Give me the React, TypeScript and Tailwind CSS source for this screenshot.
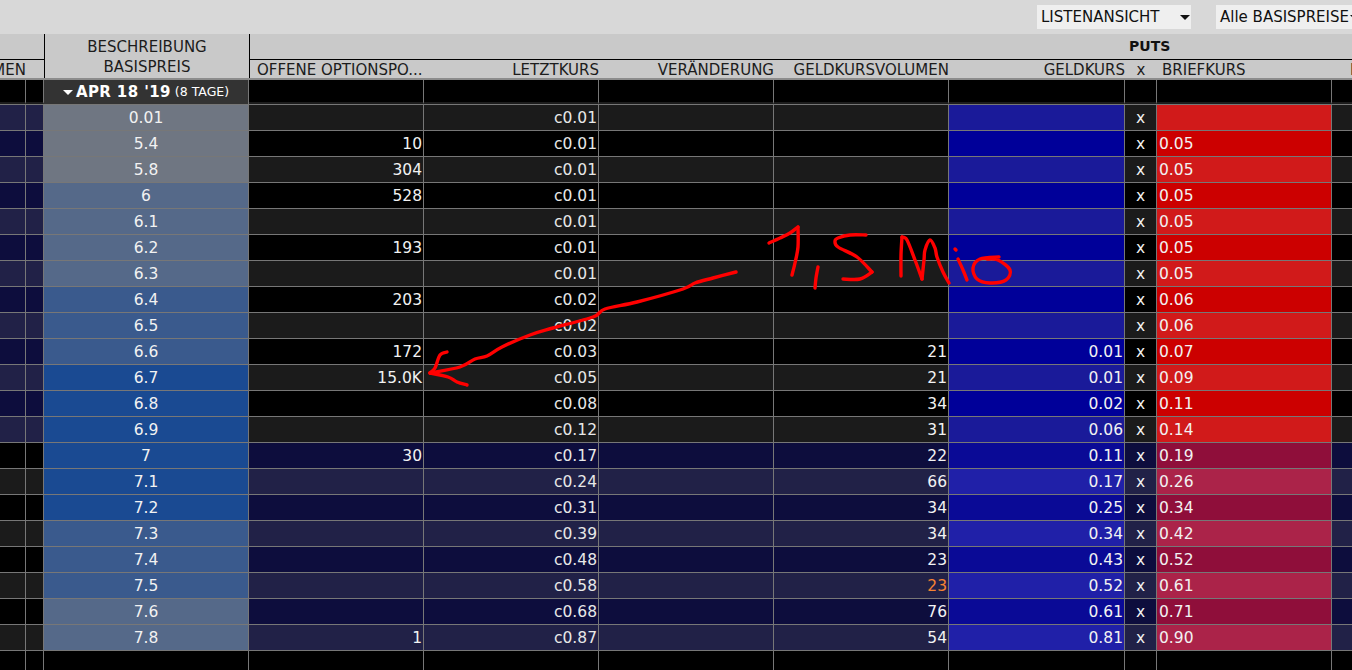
// App.tsx
const font = "[font-family:'DejaVu_Sans',sans-serif]";

type Row = {
  strike: string;
  oi?: string;
  last: string;
  bidSize?: string;
  bid?: string;
  ask?: string;
  orange?: boolean;
  tone: string;
};

const GREY = 'bg-[#6f7682]';
const SLATE = 'bg-[#556989]';
const STEEL = 'bg-[#3a5a8d]';
const BLUE = 'bg-[#1a4a92]';

const rows: Row[] = [
  { strike: '0.01', last: 'c0.01', tone: GREY },
  { strike: '5.4', oi: '10', last: 'c0.01', ask: '0.05', tone: GREY },
  { strike: '5.8', oi: '304', last: 'c0.01', ask: '0.05', tone: GREY },
  { strike: '6', oi: '528', last: 'c0.01', ask: '0.05', tone: SLATE },
  { strike: '6.1', last: 'c0.01', ask: '0.05', tone: SLATE },
  { strike: '6.2', oi: '193', last: 'c0.01', ask: '0.05', tone: SLATE },
  { strike: '6.3', last: 'c0.01', ask: '0.05', tone: SLATE },
  { strike: '6.4', oi: '203', last: 'c0.02', ask: '0.06', tone: STEEL },
  { strike: '6.5', last: 'c0.02', ask: '0.06', tone: STEEL },
  { strike: '6.6', oi: '172', last: 'c0.03', bidSize: '21', bid: '0.01', ask: '0.07', tone: STEEL },
  { strike: '6.7', oi: '15.0K', last: 'c0.05', bidSize: '21', bid: '0.01', ask: '0.09', tone: BLUE },
  { strike: '6.8', last: 'c0.08', bidSize: '34', bid: '0.02', ask: '0.11', tone: BLUE },
  { strike: '6.9', last: 'c0.12', bidSize: '31', bid: '0.06', ask: '0.14', tone: BLUE },
  { strike: '7', oi: '30', last: 'c0.17', bidSize: '22', bid: '0.11', ask: '0.19', tone: BLUE },
  { strike: '7.1', last: 'c0.24', bidSize: '66', bid: '0.17', ask: '0.26', tone: BLUE },
  { strike: '7.2', last: 'c0.31', bidSize: '34', bid: '0.25', ask: '0.34', tone: BLUE },
  { strike: '7.3', last: 'c0.39', bidSize: '34', bid: '0.34', ask: '0.42', tone: STEEL },
  { strike: '7.4', last: 'c0.48', bidSize: '23', bid: '0.43', ask: '0.52', tone: STEEL },
  { strike: '7.5', last: 'c0.58', bidSize: '23', bid: '0.52', ask: '0.61', orange: true, tone: STEEL },
  { strike: '7.6', last: 'c0.68', bidSize: '76', bid: '0.61', ask: '0.71', tone: SLATE },
  { strike: '7.8', oi: '1', last: 'c0.87', bidSize: '54', bid: '0.81', ask: '0.90', tone: SLATE },
];

const grid = 'grid grid-cols-[26px_18px_205px_175px_175px_175px_175px_176px_32px_175px_21px]';
const cell = 'h-[26px] border-r border-b border-[#777] overflow-hidden whitespace-nowrap leading-[27px]';
const groupCell = 'border-r border-b-2 border-[#777] bg-black border-b-[#1c1c1c]';

function DataRow({ row, index }: { row: Row; index: number }) {
  const light = index % 2 === 0;
  const itm = index >= 13;
  // calls are in the money above the split, puts below it
  const callBg = itm ? (light ? 'bg-[#1b1b1b]' : 'bg-black') : light ? 'bg-[#212147]' : 'bg-[#0d0d3d]';
  const putBg = itm ? (light ? 'bg-[#212147]' : 'bg-[#0d0d3d]') : light ? 'bg-[#1b1b1b]' : 'bg-black';
  const bidBg = itm ? (light ? 'bg-[#2020a8]' : 'bg-[#0a0a96]') : light ? 'bg-[#1a1a99]' : 'bg-[#000099]';
  const askBg = itm ? (light ? 'bg-[#ab2349]' : 'bg-[#8f0e3a]') : light ? 'bg-[#d11a1a]' : 'bg-[#cc0000]';
  return (
    <div className={`${grid} text-[15.5px] text-[#f2f2f2]`}>
      <div className={`${cell} ${callBg}`} />
      <div className={`${cell} ${callBg}`} />
      <div className={`${cell} ${row.tone} text-center`}>{row.strike}</div>
      <div className={`${cell} ${putBg} text-right pr-[1px]`}>{row.oi}</div>
      <div className={`${cell} ${putBg} text-right pr-[1px] text-[#e8e8e8]`}>{row.last}</div>
      <div className={`${cell} ${putBg}`} />
      <div className={`${cell} ${putBg} text-right pr-[1px] ${row.orange ? 'text-[#f58233]' : ''}`}>{row.bidSize}</div>
      <div className={`${cell} ${bidBg} text-right pr-[1px]`}>{row.bid}</div>
      <div className={`${cell} ${putBg} text-center`}>x</div>
      <div className={`${cell} ${askBg} pl-[2px]`}>{row.ask}</div>
      <div className={`h-[26px] border-b border-[#777] ${putBg}`} />
    </div>
  );
}

function Caret() {
  return <span className="border-x-[5px] border-t-[5px] border-x-transparent border-t-[#111] inline-block" />;
}

function Header() {
  return (
    <div className="flex h-[46px] bg-[#c9c9c9] border-b-2 border-[#8c8c8c] text-[15px] text-[#1c1c1c]">
      <div className="w-[45px] shrink-0 flex flex-col border-r border-black">
        <div className="h-[26px] border-b border-black" />
        <div className="flex-1 overflow-hidden flex justify-end pr-[18px] leading-[20px]">
          <span className="shrink-0">MEN</span>
        </div>
      </div>
      <div className="w-[205px] shrink-0 flex flex-col items-center pt-[3px] leading-[20px] border-r border-black whitespace-nowrap">
        <span>BESCHREIBUNG</span>
        <span>BASISPREIS</span>
      </div>
      <div className="flex-1 flex flex-col">
        <div className="h-[26px] border-b border-black pl-[879px] pt-[2px] font-bold text-[14px] leading-[20px] text-[#111]">
          PUTS
        </div>
        <div className="flex-1 flex leading-[20px] whitespace-nowrap overflow-hidden">
          <div className="w-[174px] shrink-0 pl-[7px]">OFFENE OPTIONSPO...</div>
          <div className="w-[175px] shrink-0 text-right">LETZTKURS</div>
          <div className="w-[175px] shrink-0 text-right">VERÄNDERUNG</div>
          <div className="w-[175px] shrink-0 text-right">GELDKURSVOLUMEN</div>
          <div className="w-[176px] shrink-0 text-right">GELDKURS</div>
          <div className="w-[32px] shrink-0 text-center">x</div>
          <div className="w-[175px] shrink-0 pl-[5px]">BRIEFKURS</div>
          <div className="pl-[18px]">B</div>
        </div>
      </div>
    </div>
  );
}

// catmull-rom through hand-traced points, so the strokes stay as loose as the original scribble
function smooth(points: number[][]) {
  let d = `M${points[0][0]} ${points[0][1]}`;
  for (let i = 0; i < points.length - 1; i++) {
    const p0 = points[i - 1] ?? points[i];
    const p1 = points[i];
    const p2 = points[i + 1];
    const p3 = points[i + 2] ?? p2;
    const c1x = p1[0] + (p2[0] - p0[0]) / 6;
    const c1y = p1[1] + (p2[1] - p0[1]) / 6;
    const c2x = p2[0] - (p3[0] - p1[0]) / 6;
    const c2y = p2[1] - (p3[1] - p1[1]) / 6;
    d += ` C${c1x} ${c1y} ${c2x} ${c2y} ${p2[0]} ${p2[1]}`;
  }
  return d;
}

const strokes: number[][][] = [
  [[769, 243], [780, 238], [790, 233], [798, 227]],
  [[798, 227], [798, 247], [795, 263], [792, 275]],
  [[818, 267], [816, 278], [815, 288]],
  [[866, 235], [850, 235], [838, 238], [835, 241], [838, 247], [857, 257], [872, 272]],
  [[872, 272], [860, 279], [843, 279]],
  [[901, 276], [901, 255], [902, 237]],
  [[902, 237], [907, 240], [915, 260], [922, 279]],
  [[922, 279], [924, 260], [925, 250], [930, 240], [935, 248], [937, 257], [943, 272], [949, 283]],
  [[958, 259], [963, 270], [967, 280]],
  [[955, 249], [956, 250]],
  [[999, 257], [980, 259], [973, 268], [977, 279], [990, 283], [1006, 280], [1010, 270], [998, 260], [987, 259]],
  [[736, 272], [713, 278], [695, 283], [683, 289], [637, 302], [605, 309], [593, 317], [553, 328], [530, 335], [502, 347], [487, 356], [475, 359], [460, 367], [430, 373]],
  [[447, 352], [440, 355], [435, 368], [430, 373]],
  [[430, 373], [448, 377], [457, 382], [467, 385]],
];

function Annotation() {
  return (
    <svg className="absolute left-0 top-0 pointer-events-none" width="1352" height="670" fill="none" stroke="#f00" strokeWidth="3.4" strokeLinecap="round" strokeLinejoin="round">
      {strokes.map((points, i) => (
        <path key={i} d={smooth(points)} />
      ))}
    </svg>
  );
}

export default function App() {
  return (
    <div className={`${font} relative w-[1352px] h-[670px] overflow-hidden bg-black`}>
      <div className="h-[34px] bg-[#d8d8d8] flex justify-end items-start gap-[25px] pt-[5px] text-[15px] text-[#111]">
        <div className="w-[154px] h-[24px] bg-[#efefef] flex items-center justify-between pl-[4px] pr-[1px]">
          <span className="pt-[1px]">LISTENANSICHT</span>
          <span className="flex"><Caret /></span>
        </div>
        <div className="w-[136px] h-[24px] bg-[#efefef] flex items-center pl-[4px] whitespace-nowrap overflow-hidden">
          <span className="pt-[1px]">Alle BASISPREISE</span>
          <span className="ml-[1px] flex shrink-0"><Caret /></span>
        </div>
      </div>
      <Header />
      <div className={`${grid} h-[24px]`}>
        <div className={groupCell} />
        <div className={groupCell} />
        <div className="border-r border-[#777] bg-[#333] flex items-center justify-center text-white whitespace-nowrap">
          <span className="border-x-[5px] border-t-[5px] border-x-transparent border-t-white inline-block mr-[3px]" />
          <span className="font-bold text-[15px] tracking-[0.4px]">APR 18 '19</span>
          <span className="text-[12.5px] ml-[4px]">(8 TAGE)</span>
        </div>
        {['d', 'e', 'f', 'g', 'h', 'i', 'j'].map((k) => (
          <div key={k} className={groupCell} />
        ))}
        <div className="border-b-2 bg-black border-b-[#1c1c1c]" />
      </div>
      <div className="h-[1px] bg-[#777]" />
      {rows.map((row, i) => (
        <DataRow key={row.strike} row={row} index={i} />
      ))}
      <div className={`${grid} h-[20px]`}>
        {['a', 'b', 'c', 'd', 'e', 'f', 'g', 'h', 'i', 'j'].map((k) => (
          <div key={k} className="border-r border-[#777]" />
        ))}
      </div>
      <Annotation />
    </div>
  );
}
